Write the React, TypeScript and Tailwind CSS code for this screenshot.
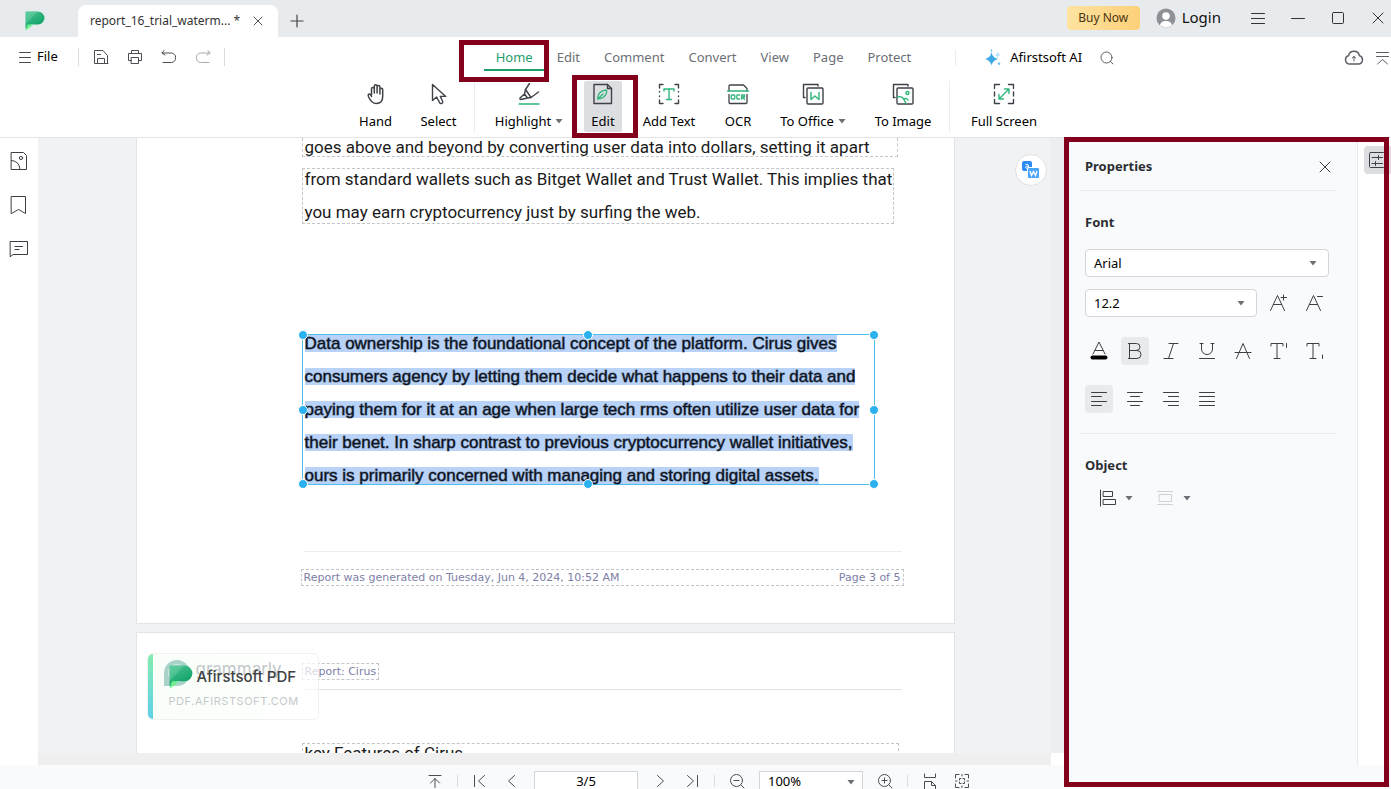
import type { ReactNode } from "react";
import clsx from "clsx";

interface IconProps {
  size?: number;
  box?: number;
  stroke?: number;
  className?: string;
  children: ReactNode;
}

function Icon({ size = 20, box = 20, stroke = 1, className, children }: IconProps) {
  return (
    <svg
      width={size}
      height={size}
      viewBox={`0 0 ${box} ${box}`}
      fill="none"
      stroke="currentColor"
      strokeWidth={stroke}
      strokeLinecap="round"
      strokeLinejoin="round"
      aria-hidden="true"
      className={clsx("shrink-0", className)}
    >
      {children}
    </svg>
  );
}

function Caret({ className }: { className?: string }) {
  return (
    <svg width="8" height="5" viewBox="0 0 8 5" aria-hidden="true" className={clsx("shrink-0 fill-[#6b6f76]", className)}>
      <path d="M0.5 0h7L4 4.6z" />
    </svg>
  );
}

function Logo({ size = 20, id }: { size?: number; id: string }) {
  return (
    <svg width={size} height={size} viewBox="0 0 20 20" aria-hidden="true" className="shrink-0">
      <defs>
        <linearGradient id={id} x1="0" y1="0" x2="0.6" y2="1">
          <stop offset="0" stopColor="#4fc596" />
          <stop offset="1" stopColor="#0a9f62" />
        </linearGradient>
      </defs>
      <path d="M0.5 0.500H13a6.500 6.500 0 0 1 0 13H6L0.500 18z" fill={`url(#${id})`} />
      <path d="M0.500 13L13 0.500H0.500z" fill="#8adfba" opacity="0.300" />
      <path d="M0.500 19.800L2.500 13.500H8.500z" fill="#6df08c" />
    </svg>
  );
}

/** Frame drawn around the part of the window that a step refers to. */
function Callout({ className }: { className: string }) {
  return <span aria-hidden="true" className={clsx("pointer-events-none absolute z-20 border-5 border-[#82001b]", className)} />;
}

const TABS = ["Home", "Edit", "Comment", "Convert", "View", "Page", "Protect"];

const GREEN = "#2fb67c";

const HandIcon = (
  <Icon size={22} box={22} stroke={1.5}>
    <path d="M6.500 12V5.800a1.400 1.400 0 0 1 2.800 0V10V3.200a1.400 1.400 0 0 1 2.800 0V10V4a1.400 1.400 0 0 1 2.800 0V11V6.600a1.400 1.400 0 0 1 2.800 0V13.500c0 4.500-2.500 7-6.500 7c-3.500 0-5.500-2-7.600-6.500c-1-2.500 0-3.300 1.300-2.800c.9.400 1.200 1.300 1.600 2.300" />
  </Icon>
);

const SelectIcon = (
  <Icon size={22} box={22} stroke={1.4}>
    <path d="M4.500 1.500V17.500L8.600 14L11.600 19.600A1.500 1.500 0 0 0 14.600 18.300L12.300 13.400H17.800z" />
  </Icon>
);

const HighlightIcon = (
  <Icon size={22} box={22} stroke={1.4}>
    <path d="M11.500 0.500L7.500 6.500L13 14.500L20.500 9" />
    <path d="M7.500 6.500L6.500 11L9.500 15L13 14.500M6.500 11L2 15Q1.500 16.500 3 16.500L9.500 15" />
    <path d="M1 21H21" stroke={GREEN} />
  </Icon>
);

const EditIcon = (
  <Icon size={22} box={22} stroke={1.4}>
    <path d="M2 1.500H15.500L19.500 5.500V20.500H2z" />
    <path d="M15.500 1.500V5.500H19.500" />
    <path d="M6 16.500C5 13.500 7 9.500 10 8.200Q12.500 7 14.500 7.200C15.200 10.500 12.500 15 8.500 15.500Q7 15.700 6.600 15.200L11 11" stroke={GREEN} />
  </Icon>
);

const AddTextIcon = (
  <Icon size={22} box={22} stroke={1.4}>
    <path d="M5 1.500H1.500V5M17 1.500H20.500V5M5 20.500H1.500V17M17 20.500H20.500V17M1.500 8.500V9M1.500 13V13.500M20.500 8.500V9M20.500 13V13.500" />
    <path d="M6 8V6H16V8M11 6V16.500M8.500 16.500H13.500" stroke={GREEN} />
  </Icon>
);

const OcrIcon = (
  <Icon size={22} box={22} stroke={1.3}>
    <path d="M2 8V3Q2 2 3 2H16.500L20 5.500V8M2 11.500V19.500Q2 20.500 3 20.500H19Q20 20.500 20 19.500V11.500" />
    <path d="M0.500 8H21.500" stroke={GREEN} />
    <g stroke={GREEN}>
      <rect x="4.200" y="12" width="3.600" height="4" rx="1" />
      <path d="M12.500 12H10.500Q9.800 12 9.800 13V15Q9.800 16 10.500 16H12.500M14.700 16.200V12H17.500V14H15L17.500 16.200" />
    </g>
  </Icon>
);

const ToOfficeIcon = (
  <Icon size={22} box={22} stroke={1.4}>
    <path d="M3 14.500H1.500V1.500H16V3" />
    <rect x="5" y="5" width="16" height="16" rx="1" />
    <path d="M9 9.500V16.500L13 13L17 16.500V9.500" stroke={GREEN} />
  </Icon>
);

const ToImageIcon = (
  <Icon size={22} box={22} stroke={1.4}>
    <path d="M3 14.500H1.500V1.500H16V3" />
    <rect x="5" y="5" width="16" height="16" rx="1" />
    <circle cx="15.500" cy="10" r="1.500" stroke={GREEN} />
    <path d="M5.500 14Q11 12 14 20.500M12 16Q14 14.500 16 17" stroke={GREEN} />
  </Icon>
);

const FullScreenIcon = (
  <Icon size={22} box={22} stroke={1.4}>
    <path d="M6.500 1.500H1.500V5.500M15.500 1.500H20.500V5.500M6.500 20.500H1.500V16.500M15.500 20.500H20.500V16.500M1.500 9V13M20.500 9V13" />
    <path d="M6 16L16 6M11.500 6H16V10.500M6 11.500V16H10.500" stroke={GREEN} />
  </Icon>
);

function Tool({ label, icon, width, caret }: { label: string; icon: ReactNode; width: string; caret?: boolean }) {
  return (
    <button type="button" className={clsx("flex h-[51px] flex-col items-center gap-[6px] pt-[2px] text-[#3f4248]", width)}>
      {icon}
      <span className="flex items-center gap-1 text-[13px] leading-5 whitespace-nowrap text-black">
        {label}
        {caret && <Caret />}
      </span>
    </button>
  );
}

function TitleBar() {
  return (
    <header className="flex h-[37px] shrink-0 bg-[#e8ebee]">
      <div className="flex w-[78px] items-center pt-1 pl-[25px]">
        <Logo id="logo-title" />
      </div>
      <div className="mt-[5px] flex w-[200px] items-center rounded-t-lg bg-white pl-3 text-[12px] text-[#333]">
        <span className="whitespace-nowrap">report_16_trial_waterm... *</span>
        <button type="button" aria-label="Close tab" className="mr-[15px] ml-auto text-[#555]">
          <Icon size={10} box={10}>
            <path d="M1 1L9 9M9 1L1 9" />
          </Icon>
        </button>
      </div>
      <button type="button" aria-label="New tab" className="ml-3 pt-1 text-[#444]">
        <Icon size={14} box={14} stroke={1.2}>
          <path d="M7 1V13M1 7H13" />
        </Icon>
      </button>
      <div className="ml-auto flex h-[35px] items-center text-[#333]">
        <button
          type="button"
          className="mr-4 h-6 w-[73px] rounded bg-linear-to-r from-[#fde3a0] to-[#fdd078] text-[12px] text-[#4a3310]"
        >
          Buy Now
        </button>
        <button type="button" className="mr-[17px] flex items-center gap-[6px] text-[15px] text-[#111]">
          <svg width="20" height="20" viewBox="0 0 20 20" aria-hidden="true">
            <circle cx="10" cy="10" r="9.500" fill="#8d9095" />
            <circle cx="10" cy="8" r="3.800" fill="#fff" />
            <path d="M4 17.300C4.500 11.500 15.500 11.500 16 17.300A9.500 9.500 0 0 1 4 17.300z" fill="#fff" />
          </svg>
          Login
        </button>
        <button type="button" aria-label="Menu" className="flex w-10 justify-center">
          <Icon size={14} box={14}>
            <path d="M0.500 2.500H13.500M0.500 7.500H13.500M0.500 12.500H13.500" />
          </Icon>
        </button>
        <button type="button" aria-label="Minimize" className="flex w-10 justify-center">
          <Icon size={14} box={14}>
            <path d="M0.500 7.500H13.500" />
          </Icon>
        </button>
        <button type="button" aria-label="Maximize" className="flex w-10 justify-center">
          <Icon size={14} box={14}>
            <rect x="1.500" y="1.500" width="11" height="11" rx="1" />
          </Icon>
        </button>
        <button type="button" aria-label="Close" className="flex w-[33px] justify-end pr-[7px]">
          <Icon size={12} box={12}>
            <path d="M1 1L11 11M11 1L1 11" />
          </Icon>
        </button>
      </div>
    </header>
  );
}

function MenuBar() {
  return (
    <div className="flex h-10 shrink-0 items-center text-[13px]">
      <div className="flex flex-1 items-center text-[#4a4d52]">
        <button type="button" className="ml-[19px] flex items-center gap-[6px] text-black">
          <Icon size={12} box={12}>
            <path d="M0.500 1.500H11.500M0.500 6.500H11.500M0.500 11.500H11.500" stroke="#4a4d52" />
          </Icon>
          File
        </button>
        <span className="mr-3 ml-5 h-[18px] w-px bg-[#d9dadd]" />
        <div className="flex items-center gap-[14px]">
          <button type="button" aria-label="Save">
            <Icon>
              <path d="M17 16.500H3.500V3.500H12L16.500 8.500V16.500M6.500 16.500V11.500H13.500V16.500M6.500 7.500H9.500" />
            </Icon>
          </button>
          <button type="button" aria-label="Print">
            <Icon>
              <path d="M6.500 6.500V3.500H13.500V6.500M6.500 13.500H3.500V6.500H16.500V13.500H13.500" />
              <rect x="6.500" y="10.500" width="7" height="6" />
            </Icon>
          </button>
          <button type="button" aria-label="Undo">
            <Icon>
              <path d="M5 3.500L3 6L6 8M3 6H12.500A4.800 4.800 0 0 1 12.500 15.500H4" />
            </Icon>
          </button>
          <button type="button" aria-label="Redo" className="text-[#a5a8ac]">
            <Icon>
              <path d="M15 3.500L17 6L14 8M17 6H7.500A4.800 4.800 0 0 0 7.500 15.500H16" />
            </Icon>
          </button>
        </div>
        <span className="ml-[11px] h-[18px] w-px bg-[#d9dadd]" />
      </div>
      <nav className="flex h-full items-center gap-6 pt-[2px] pl-1 text-[#6b6f76]">
        {TABS.map((tab) =>
          tab === "Home" ? (
            <button key={tab} type="button" className="relative -mr-3 h-full px-3 text-[#1f9d6b]">
              {tab}
              <span className="absolute inset-x-0 bottom-[6px] h-[2px] bg-[#1f9d6b]" />
              <Callout className="-right-1 -bottom-[5px] -left-[25px] top-px" />
            </button>
          ) : (
            <button key={tab} type="button">
              {tab}
            </button>
          ),
        )}
      </nav>
      <div className="flex flex-1 items-center pt-[2px] text-[#5a5d63]">
        <span className="ml-[44px] h-4 w-px bg-[#ececee]" />
        <button type="button" className="ml-7 flex items-center gap-2 whitespace-nowrap text-black">
          <svg width="18" height="18" viewBox="0 0 18 18" aria-hidden="true">
            <path d="M7.500 3Q8.300 8.500 14 10Q8.300 11.500 7.500 17Q6.700 11.500 1 10Q6.700 8.500 7.500 3z" fill="#3fa9e8" />
            <path d="M7.500 0l1 1.500l-1 1.500l-1-1.500zM15 13l1.500 1.500L15 16.500L13.500 14.500z" fill="#6cc4f2" />
            <path d="M13.500 3Q14 5.500 17 6Q14 6.500 13.500 9Q13 6.500 11 6Q13 5.500 13.500 3z" fill="#b9e2f8" />
          </svg>
          Afirstsoft AI
        </button>
        <button type="button" aria-label="Search" className="ml-[18px]">
          <Icon size={14} box={14}>
            <circle cx="6.500" cy="6.500" r="5.500" />
            <path d="M10.500 10.500L13 13" />
          </Icon>
        </button>
        <button type="button" aria-label="Upload to cloud" className="mr-3 ml-auto">
          <Icon size={20} stroke={1.5}>
            <path d="M6 16A4.200 4.200 0 0 1 4.500 7.800A5.600 5.600 0 0 1 15.500 7.800A4.200 4.200 0 0 1 14 16z" />
            <path d="M10 13V8.500M8.200 10L10 8.500L11.800 10" strokeWidth="1" />
          </Icon>
        </button>
        <button type="button" aria-label="Collapse ribbon" className="mr-[2px]">
          <Icon size={13} box={13}>
            <path d="M0.500 0.500H12.500M0.500 4.500H12.500M1.500 12L6.500 7.500L11.500 12" />
          </Icon>
        </button>
      </div>
    </div>
  );
}

function Toolbar() {
  return (
    <div className="flex h-[61px] shrink-0 items-start justify-center border-b border-[#e3e3e5] pt-1 pr-[2px]">
      <Tool label="Hand" icon={HandIcon} width="w-[63px]" />
      <Tool label="Select" icon={SelectIcon} width="w-[63px]" />
      <span className="mx-1 h-[52px] w-px bg-[#ececee]" />
      <Tool label="Highlight" icon={HighlightIcon} width="ml-1 w-[92px]" caret />
      <div className="relative mx-[9px] rounded-xs bg-[#dddee2]">
        <Tool label="Edit" icon={EditIcon} width="w-[38px]" />
        <Callout className="-top-[6px] -right-4 -bottom-[6px] -left-3" />
      </div>
      <Tool label="Add Text" icon={AddTextIcon} width="w-[76px]" />
      <Tool label="OCR" icon={OcrIcon} width="w-[62px]" />
      <Tool label="To Office" icon={ToOfficeIcon} width="w-[88px]" caret />
      <Tool label="To Image" icon={ToImageIcon} width="ml-1 w-[84px]" />
      <span className="mx-1 h-[52px] w-px bg-[#ececee]" />
      <Tool label="Full Screen" icon={FullScreenIcon} width="ml-[9px] w-[82px]" />
    </div>
  );
}

function SideBar() {
  return (
    <aside className="flex w-[38px] shrink-0 flex-col items-center gap-6 bg-white pt-[13px] pr-px text-[#3c3f44]">
      <button type="button" aria-label="Thumbnails">
        <Icon>
          <path d="M2.500 1.500H14.500L17.500 4.500V18.500H2.500zM2.500 9.500Q10.500 10 11 18.500" />
          <circle cx="12" cy="7" r="1.600" />
        </Icon>
      </button>
      <button type="button" aria-label="Bookmarks">
        <Icon>
          <path d="M2.500 1.500H16.500V18.500L9.500 14.500L2.500 18.500z" />
        </Icon>
      </button>
      <button type="button" aria-label="Comments">
        <Icon>
          <path d="M1.500 2.500H18.500V15.500H4L1.500 17.500zM6 7.500H13.500M6 10.500H10" />
        </Icon>
      </button>
    </aside>
  );
}

const SELECTED_LINES = [
  "Data ownership is the foundational concept of the platform. Cirus gives",
  "consumers agency by letting them decide what happens to their data and",
  "paying them for it at an age when large tech rms often utilize user data for",
  "their benet. In sharp contrast to previous cryptocurrency wallet initiatives,",
  "ours is primarily concerned with managing and storing digital assets.",
];

const HANDLES = [
  "-top-[5px] -left-[5px]",
  "-top-[5px] left-1/2 -ml-[5px]",
  "-top-[5px] -right-[5px]",
  "top-1/2 -mt-[5px] -left-[5px]",
  "top-1/2 -mt-[5px] -right-[5px]",
  "-bottom-[5px] -left-[5px]",
  "-bottom-[5px] left-1/2 -ml-[5px]",
  "-bottom-[5px] -right-[5px]",
];

const DASHED = "border-dashed border-[#c3c5ca]";

function DocumentView() {
  return (
    <div className="relative flex min-w-0 flex-1 flex-col items-center gap-2 overflow-hidden bg-[#f1f2f4] pl-px font-['Roboto',sans-serif] text-[17px] text-[#1a1a1a]">
      <article className="w-[819px] shrink-0 border border-t-0 border-[#e2e4e8] bg-white pr-[50px] pb-[37px] pl-[165px] whitespace-nowrap">
        <p className={clsx("w-[596px] border-x border-b pl-[2px] leading-[18px]", DASHED)}>
          goes above and beyond by converting user data into dollars, setting it apart
        </p>
        <div className={clsx("mt-[11px] flex w-[592px] flex-col gap-3 border pl-[2px] leading-[21px]", DASHED)}>
          <p>from standard wallets such as Bitget Wallet and Trust Wallet. This implies that</p>
          <p>you may earn cryptocurrency just by surfing the web.</p>
        </div>

        <div className="relative mt-[110px] flex w-[573px] flex-col items-start gap-4 border border-[#4fbdec] pl-[2px] font-['Liberation_Sans',Arial,sans-serif] leading-[17px] text-[#0c1322]">
          {SELECTED_LINES.map((line) => (
            <p key={line} className="bg-[#b8d2f8] [-webkit-text-stroke:1px_#0c132280]">
              {line}
            </p>
          ))}
          {HANDLES.map((pos) => (
            <span key={pos} className={clsx("absolute size-[10px] rounded-full border border-white bg-[#2cb1f0]", pos)} />
          ))}
        </div>

        <hr className="mt-[66px] ml-[2px] w-[598px] border-[#ececf0]" />
        <footer
          className={clsx(
            "mt-[17px] -ml-px flex w-[603px] justify-between border px-[2px] font-['DejaVu_Sans',sans-serif] text-[11px] leading-[15px] text-[#7d80a6]",
            DASHED,
          )}
        >
          <span>Report was generated on Tuesday, Jun 4, 2024, 10:52 AM</span>
          <span>Page 3 of 5</span>
        </footer>
      </article>

      <article className="relative w-[819px] shrink-0 border border-[#e2e4e8] bg-white pt-[30px] pr-[50px] pl-[165px]">
        <p className={clsx("w-fit border px-[2px] font-['DejaVu_Sans',sans-serif] text-[11px] leading-[15px] text-[#7d80a6]", DASHED)}>
          Report: Cirus
        </p>
        <hr className="mt-[9px] ml-[2px] w-[598px] border-[#dfe1ea]" />
        <h2 className={clsx("mt-[53px] h-[60px] w-[597px] border pl-[2px] leading-[18px]", DASHED)}>key Features of Cirus</h2>

        <div className="absolute top-5 left-[10px] flex h-[67px] w-[172px] overflow-hidden rounded-md border border-[#f0f1f3] bg-linear-to-r from-[#f8fef8]/90 to-white/70">
          <span className="w-[5px] bg-linear-to-b from-[#84ecae] to-[#5fcfe8]" />
          <div className="relative flex flex-1 flex-col pt-[11px] pl-4 font-['Inter',sans-serif]">
            <svg width="30" height="30" viewBox="0 0 30 30" aria-hidden="true" className="absolute top-1 left-[9px]">
              <path d="M2 28V15A13 13 0 1 1 15 28z" fill="#a9d3c9" />
              <circle cx="15" cy="15" r="9" fill="#d4ece5" />
              <path d="M20 11A6.500 6.500 0 1 0 21 17H16" fill="none" stroke="#7fbfae" strokeWidth="2" />
            </svg>
            <span className="absolute top-[5px] left-[43px] text-[17px] leading-5 text-[#c3c8ca]">grammarly</span>
            <div className="relative flex items-center gap-1 text-[15px] leading-6 font-medium text-[#3e4245]">
              <Logo size={24} id="logo-card" />
              Afirstsoft PDF
            </div>
            <span className="mt-1 text-[11px] leading-4 tracking-wider text-[#c5c9cb]">PDF.AFIRSTSOFT.COM</span>
          </div>
        </div>
      </article>

      <button
        type="button"
        aria-label="Translate"
        className="absolute top-4 right-1 flex size-8 items-center justify-center rounded-full border border-[#dfe1e5] bg-white"
      >
        <svg width="20" height="20" viewBox="0 0 20 20" aria-hidden="true">
          <rect x="1" y="1" width="10" height="10" rx="2" fill="#2d8cf5" />
          <path d="M4.500 4.500Q7.500 3.500 7.500 6V8.500M7.500 6.200Q4.500 6 4.500 7.500Q5 8.800 7.500 7.800" stroke="#fff" fill="none" />
          <rect x="6.500" y="7.500" width="12" height="11" rx="1.500" fill="#4aa3fa" stroke="#fff" />
          <path d="M9 11L10.500 15.500L12.500 11.500L14.500 15.500L16 11" stroke="#fff" strokeWidth="1.400" fill="none" />
        </svg>
      </button>
    </div>
  );
}

const FORMATS = [
  {
    label: "Font color",
    icon: (
      <>
        <path d="M4 13L10 1L16 13M6 9.500H14" />
        <path d="M3.500 16.500H16.500" stroke="#000" strokeWidth="4" />
      </>
    ),
  },
  { label: "Bold", icon: <path d="M4.500 2.500V17.500H12A4 4 0 0 0 12 9.500H4.500M11.500 9.500A3.500 3.500 0 0 0 11.500 2.500H3.500M3.500 17.500H5" /> },
  { label: "Italic", icon: <path d="M8 2.500H17M3 17.500H12M12.500 2.500L7.500 17.500" /> },
  { label: "Underline", icon: <path d="M3 2.500H6M14 2.500H17M4.500 2.500V8A5.500 5.500 0 0 0 15.500 8V2.500M2.500 17.500H17.500" /> },
  { label: "Strikethrough", icon: <path d="M3.500 17.500L10 2.500L16.500 17.500M2 11.500H18" /> },
  { label: "Superscript", icon: <path d="M2 5V2.500H14V5M8 2.500V17.500M5 17.500H11M17.500 2.500V6.500" /> },
  { label: "Subscript", icon: <path d="M2 5V2.500H14V5M8 2.500V17.500M5 17.500H11M17.500 14V17.500" /> },
];

const ALIGNS = [
  { label: "Align left", icon: <path d="M2.500 3.500H17.500M2.500 7.500H12.500M2.500 12.500H17.500M2.500 16.500H12.500" /> },
  { label: "Align center", icon: <path d="M2.500 3.500H17.500M5.500 7.500H14.500M2.500 12.500H17.500M5.500 16.500H14.500" /> },
  { label: "Align right", icon: <path d="M2.500 3.500H17.500M7.500 7.500H17.500M2.500 12.500H17.500M7.500 16.500H17.500" /> },
  { label: "Justify", icon: <path d="M2.500 3.500H17.500M2.500 7.500H17.500M2.500 12.500H17.500M2.500 16.500H17.500" /> },
];

const FORMAT_BUTTON = "flex size-7 items-center justify-center rounded-sm";

function SelectBox({ label, value, className }: { label: string; value: string; className: string }) {
  return (
    <div className={clsx("relative", className)}>
      <select
        aria-label={label}
        className="h-7 w-full appearance-none rounded-sm border border-[#d3d5da] bg-white pt-px pl-2 text-[13px] text-black"
      >
        <option>{value}</option>
      </select>
      <Caret className="pointer-events-none absolute top-3 right-3" />
    </div>
  );
}

function PropertiesPanel() {
  return (
    <section className="relative flex w-[327px] shrink-0">
      <div className="flex w-[294px] flex-col border-r border-[#e8eaed] bg-[#f9fafc] pl-4 text-[13px] text-[#3c3f44]">
        <div className="flex h-[53px] w-64 items-center border-b border-[#e8eaed] pt-[5px] pr-[5px] pl-[5px]">
          <h2 className="font-bold text-[#2b2e33]">Properties</h2>
          <button type="button" aria-label="Close panel" className="ml-auto">
            <Icon size={12} box={12}>
              <path d="M1 1L11 11M11 1L1 11" />
            </Icon>
          </button>
        </div>

        <div className="w-64 border-b border-[#e8eaed] pt-[21px] pb-5 pl-[5px]">
          <h3 className="leading-5 font-bold text-[#2b2e33]">Font</h3>
          <SelectBox label="Font family" value="Arial" className="mt-[17px] w-[244px]" />
          <div className="mt-3 flex items-center gap-2">
            <SelectBox label="Font size" value="12.2" className="w-[172px]" />
            <button type="button" aria-label="Increase font size" className={FORMAT_BUTTON}>
              <Icon>
                <path d="M1.500 17.500L8.500 2.500L15.500 17.500M4.500 11.500H12.500M12 4.500H17.500M14.500 2V7" />
              </Icon>
            </button>
            <button type="button" aria-label="Decrease font size" className={FORMAT_BUTTON}>
              <Icon>
                <path d="M1.500 17.500L8.500 2.500L15.500 17.500M4.500 11.500H12.500M12.500 3.500H17.500" />
              </Icon>
            </button>
          </div>
          <div className="mt-5 flex gap-2">
            {FORMATS.map(({ label, icon }) => (
              <button
                key={label}
                type="button"
                aria-label={label}
                className={clsx(FORMAT_BUTTON, label === "Bold" && "bg-[#e9eaec]")}
              >
                <Icon>{icon}</Icon>
              </button>
            ))}
          </div>
          <div className="mt-5 flex gap-2">
            {ALIGNS.map(({ label, icon }) => (
              <button
                key={label}
                type="button"
                aria-label={label}
                className={clsx(FORMAT_BUTTON, label === "Align left" && "bg-[#e9eaec]")}
              >
                <Icon>{icon}</Icon>
              </button>
            ))}
          </div>
        </div>

        <div className="pt-[21px] pl-[5px]">
          <h3 className="leading-5 font-bold text-[#2b2e33]">Object</h3>
          <div className="mt-[13px] flex gap-[22px] pl-3">
            <button type="button" aria-label="Align objects" className="flex items-center gap-2">
              <Icon>
                <path d="M3.500 2V18M6.500 3.500H15.500V8.500H6.500zM6.500 11.500H18.500V16.500H6.500z" />
              </Icon>
              <Caret />
            </button>
            <button type="button" aria-label="Distribute objects" className="flex items-center gap-2 text-[#cfd1d5]">
              <Icon>
                <path d="M2.500 3.500H17.500M4.500 6.500H16.500V13.500H4.500zM2.500 16.500H17.500" />
              </Icon>
              <Caret />
            </button>
          </div>
        </div>
      </div>

      <div className="flex flex-1 flex-col bg-white pt-2 pl-[6px]">
        <button type="button" aria-label="Properties" className="flex h-7 items-center rounded-l-sm bg-[#dddee2] pl-[3px] text-[#3c3f44]">
          <Icon>
            <rect x="2.500" y="2.500" width="15" height="15" rx="1" />
            <path d="M5 7.500H15.500M11.500 5.500V9.500M5 13.500H15.500M8.500 11.500V15.500" />
          </Icon>
        </button>
      </div>
      <Callout className="-top-px right-[2px] -bottom-[22px] left-0" />
    </section>
  );
}

function StatusButton({ label, children }: { label: string; children: ReactNode }) {
  return (
    <button type="button" aria-label={label} className="flex h-5 w-8 items-center justify-center">
      <Icon size={16} box={16}>
        {children}
      </Icon>
    </button>
  );
}

function StatusBar() {
  const divider = <span className="mx-[6px] mt-1 h-3 w-px bg-[#dcdde0]" />;

  return (
    <footer className="flex h-6 shrink-0 items-start justify-center overflow-hidden bg-[#f9fafc] pt-[6px] pl-[6px] text-[13px] text-[#4a4d52]">
      <StatusButton label="Back to top">
        <path d="M2 2.500H14M8 14.500V5.500M3.500 10L8 5.500L12.500 10" />
      </StatusButton>
      {divider}
      <StatusButton label="First page">
        <path d="M2.500 2.500V13.500M12.500 2.500L6.500 8L12.500 13.500" />
      </StatusButton>
      <StatusButton label="Previous page">
        <path d="M10.500 2.500L4.500 8L10.500 13.500" />
      </StatusButton>
      <input
        aria-label="Page number"
        defaultValue="3/5"
        className="mx-[6px] h-5 w-[104px] border border-[#d3d5da] bg-white text-center text-black"
      />
      <StatusButton label="Next page">
        <path d="M5.500 2.500L11.500 8L5.500 13.500" />
      </StatusButton>
      <StatusButton label="Last page">
        <path d="M3.500 2.500L9.500 8L3.500 13.500M13.500 2.500V13.500" />
      </StatusButton>
      {divider}
      <StatusButton label="Zoom out">
        <circle cx="7.500" cy="7.500" r="6" />
        <path d="M5 7.500H10M12 12L15 15" />
      </StatusButton>
      <div className="relative mx-[6px] w-[104px]">
        <select aria-label="Zoom level" className="h-5 w-full appearance-none border border-[#d3d5da] bg-white pl-2 text-black">
          <option>100%</option>
        </select>
        <Caret className="pointer-events-none absolute top-[9px] right-2" />
      </div>
      <StatusButton label="Zoom in">
        <circle cx="7.500" cy="7.500" r="6" />
        <path d="M5 7.500H10M7.500 5V10M12 12L15 15" />
      </StatusButton>
      {divider}
      <StatusButton label="Fit width">
        <path d="M2.500 1V4.500H13.500V1M2.500 16V8.500H9.500L13.500 12.500V16M9.500 8.500V12.500H13.500" />
      </StatusButton>
      <StatusButton label="Fit page">
        <path d="M1.500 5V1.500H5M11 1.500H14.500V5M1.500 11V14.500H5M11 14.500H14.500V11M8 1.500V3M8 13V14.500M1.500 8H3M13 8H14.500" />
        <path d="M5.500 7V5.500H7M9 5.500H10.500V7M5.500 9V10.500H7M9 10.500H10.500V9" />
      </StatusButton>
    </footer>
  );
}

export default function App() {
  return (
    <div className="flex h-screen flex-col overflow-hidden bg-white font-['Noto_Sans',sans-serif]">
      <TitleBar />
      <MenuBar />
      <Toolbar />
      <main className="flex min-h-0 flex-1">
        <SideBar />
        <div className="flex min-w-0 flex-1 flex-col">
          <div className="flex min-h-0 flex-1">
            <DocumentView />
            <div className="w-[13px] bg-[#edeef1]" />
          </div>
          <div className="flex h-3 shrink-0">
            <div className="flex-1 bg-[#efefef]" />
            <div className="w-[13px] bg-white" />
          </div>
        </div>
        <PropertiesPanel />
      </main>
      <StatusBar />
    </div>
  );
}
